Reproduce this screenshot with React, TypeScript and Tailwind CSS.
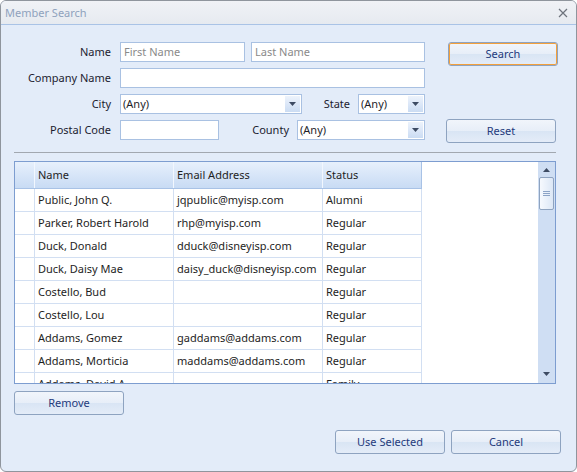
import React from 'react';

const rows = [
  ['Public, John Q.', 'jqpublic@myisp.com', 'Alumni'],
  ['Parker, Robert Harold', 'rhp@myisp.com', 'Regular'],
  ['Duck, Donald', 'dduck@disneyisp.com', 'Regular'],
  ['Duck, Daisy Mae', 'daisy_duck@disneyisp.com', 'Regular'],
  ['Costello, Bud', '', 'Regular'],
  ['Costello, Lou', '', 'Regular'],
  ['Addams, Gomez', 'gaddams@addams.com', 'Regular'],
  ['Addams, Morticia', 'maddams@addams.com', 'Regular'],
  ['Addams, David A.', '', 'Family'],
];

function Caret() {
  return (
    <svg width="7" height="4" viewBox="0 0 7 4">
      <path d="M0 0h7L3.5 4z" fill="#3d4b63" />
    </svg>
  );
}

function Button({ label, focused, className }: { label: string; focused?: boolean; className?: string }) {
  return (
    <button
      className={
        'flex h-[24px] w-[110px] items-center justify-center rounded-[3px] border border-[#8ea3c0] bg-[linear-gradient(#f1f5fb_0%,#e7eef8_50%,#d9e5f4_52%,#e4ecf8_100%)] text-[11px] text-[#243a7c] ' +
        (focused ? 'shadow-[inset_0_0_0_1px_#f3a03c] ' : '') +
        (className ?? '')
      }
    >
      {label}
    </button>
  );
}

function TextBox({ placeholder, w }: { placeholder?: string; w: string }) {
  return (
    <div className={`flex h-[20px] items-center border border-[#a9c1e2] bg-white pl-[3px] text-[11px] text-[#8a8a8a] ${w}`}>
      {placeholder}
    </div>
  );
}

function Combo({ w }: { w: string }) {
  return (
    <div className={`flex h-[20px] items-center border border-[#a9c1e2] bg-white pl-[2px] text-[11px] text-[#1e1e2a] ${w}`}>
      <span className="flex-1">(Any)</span>
      <div className="mr-px flex h-[16px] w-[15px] items-center justify-center bg-[linear-gradient(#edf3fc,#cbdcf3)]">
        <Caret />
      </div>
    </div>
  );
}

function Label({ text, w }: { text: string; w: string }) {
  return <div className={`text-right text-[11px] text-[#1c1c30] ${w}`}>{text}</div>;
}

export default function App() {
  return (
    <div
      className="flex h-[472px] w-[577px] flex-col overflow-hidden rounded-[6px] border border-[#8f959d] bg-[#e3ecf9]"
      style={{ fontFamily: '"Noto Sans", "Open Sans", sans-serif' }}
    >
      <div className="flex h-[24px] shrink-0 items-center justify-between border-b border-[#a9c3e6] bg-[linear-gradient(#f0f2f6,#e6eaf0)] pl-[4px] pr-[8px] pt-px">
        <span className="text-[11px] text-[#8fa2bd]">Member Search</span>
        <svg width="10" height="10" viewBox="0 0 10 10">
          <path d="M1 1l8 8M9 1l-8 8" stroke="#6d737c" strokeWidth="1.2" />
        </svg>
      </div>

      <div className="flex flex-col px-[13px] pt-[17px]">
        <div className="flex">
          <div className="flex w-[411px] flex-col gap-[6px]">
            <div className="flex items-center gap-[9px]">
              <Label text="Name" w="w-[97px]" />
              <TextBox placeholder="First Name" w="w-[125px]" />
              <TextBox placeholder="Last Name" w="ml-[-3px] w-[174px]" />
            </div>
            <div className="flex items-center gap-[9px]">
              <Label text="Company Name" w="w-[97px]" />
              <TextBox w="w-[305px]" />
            </div>
            <div className="flex items-center">
              <Label text="City" w="w-[97px]" />
              <div className="ml-[9px]">
                <Combo w="w-[182px]" />
              </div>
              <Label text="State" w="w-[56px] pr-[8px]" />
              <Combo w="w-[67px]" />
            </div>
            <div className="flex items-center">
              <Label text="Postal Code" w="w-[97px]" />
              <div className="ml-[9px]">
                <TextBox w="w-[99px]" />
              </div>
              <Label text="County" w="w-[78px] pr-[8px]" />
              <Combo w="w-[128px]" />
            </div>
          </div>
          <div className="ml-[23px] flex flex-col">
            <Button label="Search" focused />
            <Button label="Reset" className="ml-[-2px] mt-[53px]" />
          </div>
        </div>

        <div className="mt-[9px] h-px w-[542px] bg-[#a2a8b0]" />

        <div className="mt-[8px] flex h-[223px] w-[542px] border border-[#7d9dd0] bg-white">
          <div className="flex-1 overflow-hidden text-[11px] text-[#1e1e1e]">
            <div className="flex h-[27px] w-fit border-b border-[#a8c2e6] bg-[linear-gradient(#e7f0fc,#c8dbf4)]">
              <div className="w-[20px] border-r border-[#f2f7fe]" />
              <div className="flex w-[139px] items-center border-r border-[#f2f7fe] pl-[3px]">Name</div>
              <div className="flex w-[149px] items-center border-r border-[#f2f7fe] pl-[3px]">Email Address</div>
              <div className="flex w-[99px] items-center border-r border-[#a8c2e6] pl-[3px]">Status</div>
            </div>
            {rows.map((r, i) => (
              <div key={i} className="flex h-[23px] shrink-0">
                <div className="w-[20px] border-b border-r border-[#d2dff2]" />
                <div className="flex w-[139px] items-center whitespace-nowrap border-b border-r border-[#d2dff2] pl-[3px]">{r[0]}</div>
                <div className="flex w-[149px] items-center whitespace-nowrap border-b border-r border-[#d2dff2] pl-[3px]">{r[1]}</div>
                <div className="flex w-[99px] items-center whitespace-nowrap border-b border-r border-[#d2dff2] pl-[3px]">{r[2]}</div>
              </div>
            ))}
          </div>
          <div className="flex w-[17px] flex-col items-center bg-[#cfdef3]">
            <div className="flex h-[15px] items-center justify-center">
              <svg width="7" height="4" viewBox="0 0 7 4">
                <path d="M3.5 0L7 4H0z" fill="#3d4b63" />
              </svg>
            </div>
            <div className="flex h-[33px] w-[15px] items-center justify-center rounded-[2px] border border-[#8ea3c0] bg-[linear-gradient(90deg,#f6f9fe,#dce7f6)]">
              <svg width="7" height="5" viewBox="0 0 7 5">
                <path d="M0 0.5h7M0 2.5h7M0 4.5h7" stroke="#8ca3c6" strokeWidth="1" />
              </svg>
            </div>
            <div className="flex-1" />
            <div className="flex h-[18px] items-center justify-center">
              <Caret />
            </div>
          </div>
        </div>

        <Button label="Remove" className="mt-[7px]" />

        <div className="mt-[15px] flex justify-end gap-[6px] pr-[2px]">
          <Button label="Use Selected" />
          <Button label="Cancel" />
        </div>
      </div>
    </div>
  );
}
